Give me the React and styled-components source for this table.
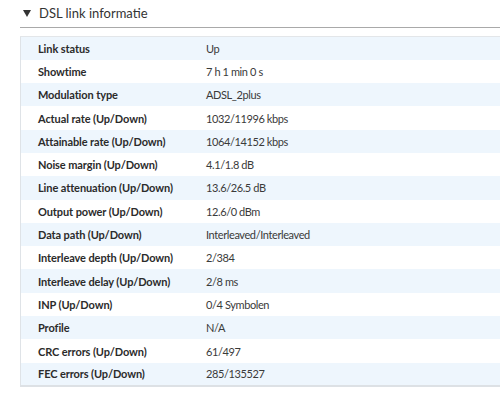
import React from 'react';
import styled, { createGlobalStyle } from 'styled-components';

const GlobalStyle = createGlobalStyle`
  html, body {
    margin: 0;
    padding: 0;
    background: #ffffff;
  }
  body {
    font-family: Lato, "Open Sans", sans-serif;
    color: #333333;
  }
`;

const Page = styled.div`
  width: 500px;
  height: 402px;
  overflow: hidden;
  padding: 0 0 0 20px;
  box-sizing: border-box;
`;

const Header = styled.div`
  display: flex;
  align-items: center;
  gap: 8px;
  height: 28px;
  padding-left: 3px;
  padding-bottom: 1px;
  border-bottom: 1px solid #a9a9a9;
  box-sizing: border-box;
`;

const Arrow = styled.span`
  width: 0;
  height: 0;
  border-left: 4px solid transparent;
  border-right: 4px solid transparent;
  border-top: 7px solid #333;
  margin-top: 1px;
`;

const Title = styled.h2`
  margin: 0;
  font-size: 13px;
  font-weight: 400;
  color: #333;
`;

const Table = styled.table`
  margin-top: 8px;
  width: 100%;
  border-collapse: collapse;
  border-top: 1px solid #e3e6e9;
  border-left: 1px solid #dfe3e7;
  border-bottom: 2px solid #dde1e5;
  font-size: 11px;
`;

const Row = styled.tr`
  height: 23.3px;
  background: ${p => (p.$shaded ? '#eef6fd' : '#ffffff')};
`;

const Label = styled.td`
  width: 168px;
  padding: 0 0 0 17px;
  font-weight: 700;
  color: #2b2b2b;
  letter-spacing: -0.1px;
`;

const Value = styled.td`
  padding: 0;
  color: #3a3a3a;
  letter-spacing: -0.4px;
`;

const rows = [
  ['Link status', 'Up'],
  ['Showtime', '7 h 1 min 0 s'],
  ['Modulation type', 'ADSL_2plus'],
  ['Actual rate (Up/Down)', '1032/11996 kbps'],
  ['Attainable rate (Up/Down)', '1064/14152 kbps'],
  ['Noise margin (Up/Down)', '4.1/1.8 dB'],
  ['Line attenuation (Up/Down)', '13.6/26.5 dB'],
  ['Output power (Up/Down)', '12.6/0 dBm'],
  ['Data path (Up/Down)', 'Interleaved/Interleaved'],
  ['Interleave depth (Up/Down)', '2/384'],
  ['Interleave delay (Up/Down)', '2/8 ms'],
  ['INP (Up/Down)', '0/4 Symbolen'],
  ['Profile', 'N/A'],
  ['CRC errors (Up/Down)', '61/497'],
  ['FEC errors (Up/Down)', '285/135527'],
];

export default function App() {
  return (
    <Page>
      <GlobalStyle />
      <Header>
        <Arrow />
        <Title>DSL link informatie</Title>
      </Header>
      <Table>
        <tbody>
          {rows.map(([label, value], i) => (
            <Row key={label} $shaded={i % 2 === 0}>
              <Label>{label}</Label>
              <Value>{value}</Value>
            </Row>
          ))}
        </tbody>
      </Table>
    </Page>
  );
}
